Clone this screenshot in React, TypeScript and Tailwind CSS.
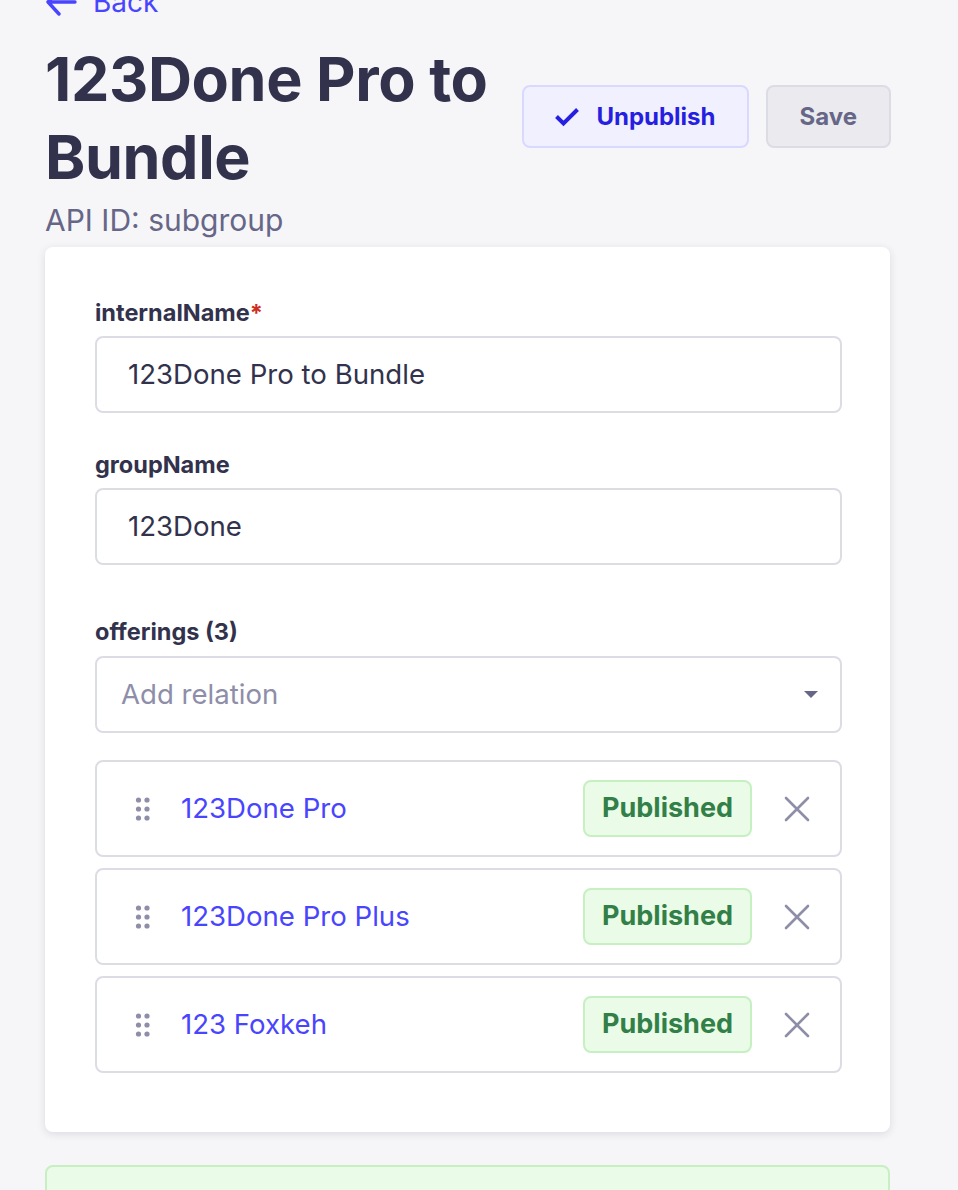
import React from 'react';

const font = { fontFamily: 'Inter, "Noto Sans", sans-serif' };

type Relation = { id: number; name: string };

const relations: Relation[] = [
  { id: 1, name: '123Done Pro' },
  { id: 2, name: '123Done Pro Plus' },
  { id: 3, name: '123 Foxkeh' },
];

const DragIcon = () => (
  <svg width="16" height="26" viewBox="0 0 16 26" fill="#8e8ea9">
    <circle cx="3.5" cy="4" r="2.6" />
    <circle cx="12" cy="4" r="2.6" />
    <circle cx="3.5" cy="13" r="2.6" />
    <circle cx="12" cy="13" r="2.6" />
    <circle cx="3.5" cy="22" r="2.6" />
    <circle cx="12" cy="22" r="2.6" />
  </svg>
);

const CloseIcon = () => (
  <svg width="26" height="26" viewBox="0 0 26 26" fill="none" stroke="#8e8ea9" strokeWidth="2.6" strokeLinecap="round">
    <path d="M2 2L24 24M24 2L2 24" />
  </svg>
);

export default function App() {
  return (
    <div className="min-h-screen bg-[#f6f6f9] pl-[45px] pr-[68px] overflow-hidden" style={font}>
      {/* back link */}
      <div className="-mt-[14px] flex items-center gap-[16px] h-[32px] text-[28px] leading-[32px] text-[#4945ff]">
        <svg width="32" height="28" viewBox="0 0 32 28" fill="none" stroke="#4945ff" strokeWidth="3.4" strokeLinecap="round" strokeLinejoin="round">
          <path d="M30 14H3M14 2L3 14L14 26" />
        </svg>
        <span>Back</span>
      </div>

      {/* header */}
      <div className="mt-[22px] flex items-start justify-between">
        <div className="w-[470px]">
          <h1 className="text-[61px] leading-[78px] font-bold text-[#32324d] tracking-[-0.4px]">
            123Done Pro to Bundle
          </h1>
          <p className="mt-[6px] text-[30px] leading-[36px] text-[#666687]">API ID: subgroup</p>
        </div>
        <div className="mt-[45px] -mr-[1px] flex gap-[17px]">
          <button className="h-[63px] px-[31px] flex items-center gap-[17px] rounded-[8px] border-2 border-[#d9d8ff] bg-[#f0f0ff] text-[24px] font-bold text-[#271fe0]">
            <svg width="24" height="20" viewBox="0 0 24 20" fill="none" stroke="#271fe0" strokeWidth="4" strokeLinejoin="miter">
              <path d="M1.5 9.5L8.5 16.5L22.5 2.5" />
            </svg>
            Unpublish
          </button>
          <button className="h-[63px] px-[32px] rounded-[8px] border-2 border-[#dcdce4] bg-[#eaeaef] text-[24px] font-bold text-[#666687]">
            Save
          </button>
        </div>
      </div>

      {/* form card */}
      <div className="mt-[9px] bg-white rounded-[8px] shadow-[0_2px_8px_rgba(33,33,52,0.12)] pl-[50px] pr-[48px] pt-[50px] pb-[59px]">
        <label className="block text-[23.5px] leading-[32px] font-bold text-[#32324d]">
          internalName<span className="text-[#d02b20]">*</span>
        </label>
        <div className="mt-[7px] h-[77px] rounded-[8px] border-2 border-[#dcdce4] flex items-center px-[31px] text-[27.6px] text-[#32324d]">
          123Done Pro to Bundle
        </div>

        <label className="mt-[36px] block text-[23.5px] leading-[32px] font-bold text-[#32324d]">groupName</label>
        <div className="mt-[7px] h-[77px] rounded-[8px] border-2 border-[#dcdce4] flex items-center px-[31px] text-[27.6px] text-[#32324d]">
          123Done
        </div>

        <label className="mt-[51px] block text-[23.5px] leading-[32px] font-bold text-[#32324d]">offerings (3)</label>
        <div className="mt-[8px] h-[77px] rounded-[8px] border-2 border-[#dcdce4] flex items-center justify-between pl-[24px] pr-[22px] text-[27.6px] text-[#8e8ea9]">
          <span>Add relation</span>
          <svg width="14" height="8" viewBox="0 0 14 8" fill="#666687">
            <path d="M0 0H14L7 7Z" />
          </svg>
        </div>

        <div className="mt-[27px] flex flex-col gap-[11px]">
          {relations.map((r) => (
            <div key={r.id} className="h-[97px] rounded-[8px] border-2 border-[#dcdce4] flex items-center pl-[38px] pr-[30px]">
              <DragIcon />
              <span className="ml-[30px] flex-1 text-[27.6px] text-[#4945ff]">{r.name}</span>
              <span className="h-[57px] px-[17px] flex items-center rounded-[8px] border-2 border-[#c6f0c2] bg-[#eafbe7] text-[27px] font-bold text-[#328048]">
                Published
              </span>
              <span className="ml-[32px]">
                <CloseIcon />
              </span>
            </div>
          ))}
        </div>
      </div>

      <div className="mt-[33px] h-[120px] rounded-[8px] border-2 border-[#c6f0c2] bg-[#eafbe7]" />
    </div>
  );
}
